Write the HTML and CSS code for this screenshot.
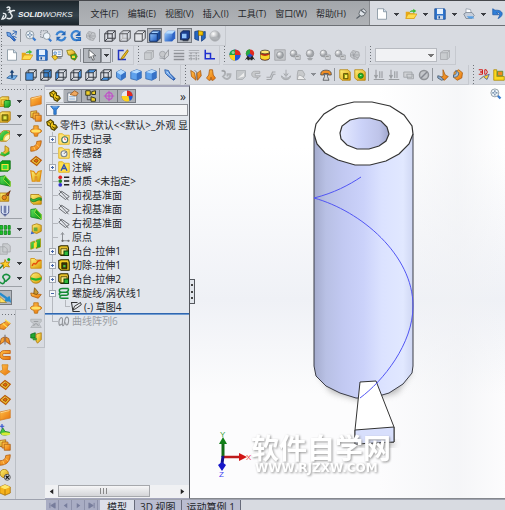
FILE: index.html
```html
<!DOCTYPE html>
<html lang="zh-CN">
<head>
<meta charset="utf-8">
<title>SolidWorks</title>
<link rel="stylesheet" href="styles.css">
</head>
<body>
<svg class="sprite" aria-hidden="true">
  <defs>
    <linearGradient id="gb" x1="0" y1="0" x2="1" y2="1"><stop offset="0" stop-color="#8fc2f8"/><stop offset="1" stop-color="#1c57c0"/></linearGradient>
    <linearGradient id="gy" x1="0" y1="0" x2="1" y2="1"><stop offset="0" stop-color="#fff27a"/><stop offset="1" stop-color="#d99a06"/></linearGradient>
    <linearGradient id="go" x1="0" y1="0" x2="1" y2="1"><stop offset="0" stop-color="#ffc04a"/><stop offset="1" stop-color="#e8730a"/></linearGradient>
    <linearGradient id="gg" x1="0" y1="0" x2="1" y2="1"><stop offset="0" stop-color="#5fe25f"/><stop offset="1" stop-color="#0b9414"/></linearGradient>
    <radialGradient id="gs" cx=".35" cy=".3"><stop offset="0" stop-color="#fff"/><stop offset="1" stop-color="#a2a5a9"/></radialGradient>
  </defs>
  <symbol id="arrow" viewBox="0 0 16 16"><path d="M1 3l5 1 1 3 6 6-2 2-6-6-3-1z" fill="url(#gb)" stroke="#1a4f9c"/><path d="M8 6l6-4M9 1l5 1-1 5M9 8l5 2" stroke="#2d64b4" fill="none" stroke-width="1.300"/></symbol>
  <symbol id="pen" viewBox="0 0 16 16"><path d="M1 1l5 1 2 4 7 7-2 2-7-5-4-4z" fill="url(#gb)" stroke="#1a4f9c"/><path d="M4 4l8 9" stroke="#d9f0ff"/></symbol>
  <symbol id="mag" viewBox="0 0 16 16"><path d="M10 10l4 4" stroke="#397bd0" stroke-width="3"/><circle cx="6.500" cy="6.500" r="5.300" fill="#eef5fb" stroke="#7a858e"/><path d="M6.500 3v7M3 6.500h7" stroke="#5a7898" stroke-width="1.500" stroke-dasharray="2.500 2"/></symbol>
  <symbol id="magarea" viewBox="0 0 16 16"><path d="M1 1h9v9H1z" fill="none" stroke="#6c7781" stroke-dasharray="2 1"/><path d="M11 11l4 4" stroke="#397bd0" stroke-width="3"/><circle cx="9" cy="8" r="4.500" fill="#eef5fb" stroke="#7a858e"/></symbol>
  <symbol id="refresh" viewBox="0 0 16 16"><path d="M2 7a6 6 0 0 1 10-3M14 9a6 6 0 0 1-10 3" fill="none" stroke="#3a83d2" stroke-width="3"/><path d="M14 1v6H8zM2 15V9h6z" fill="#2467b8"/></symbol>
  <symbol id="rot" viewBox="0 0 16 16"><path d="M12 3a6 6 0 1 0 1 8" fill="none" stroke="#3a83d2" stroke-width="3"/><path d="M14 1v7H7z" fill="#2467b8"/><path d="M8 10h6v4H8" stroke="#2467b8" fill="none" stroke-width="1.500"/></symbol>
  <symbol id="gbits" viewBox="0 0 16 16"><path d="M2 6l3-4 4 1 4 1 1 5-3 5-5-1-4-3z" fill="#c5c8cc" stroke="#9b9ea2"/><path d="M5 4l2 9M9 4l-3 5 6 3M3 8h10" stroke="#989ba0" fill="none"/></symbol>
  <symbol id="wire" viewBox="0 0 16 16"><path d="M1 5h10v10H1zM5 1h10v10H5zM1 5l4-4M11 5l4-4M11 15l4-4M1 15l4-4" fill="none" stroke="#3a3d42" stroke-width="1.300"/></symbol>
  <symbol id="hidden" viewBox="0 0 16 16"><path d="M5 1v10h10M1 15l4-4" fill="none" stroke="#aaa"/><path d="M1 5h10v10H1zM5 1h10v10M1 5l4-4M11 5l4-4M11 15l4-4" fill="none" stroke="#55585d" stroke-width="1.300"/></symbol>
  <symbol id="plain" viewBox="0 0 16 16"><path d="M1 5h10v10H1zM1 5l4-4h10v10l-4 4M11 5l4-4" fill="#e3e5e9" stroke="#44474c" stroke-width="1.300"/></symbol>
  <symbol id="shade" viewBox="0 0 16 16"><path d="M1 5l4-4h10v10l-4 4H1z" fill="#1b4c9e" stroke="#122c5e"/><path d="M1 5h10v10H1z" fill="url(#gb)" stroke="#122c5e"/><path d="M3 4l2-2h9l-3 2z" fill="#a5d2ff"/></symbol>
  <symbol id="soft" viewBox="0 0 16 16"><path d="M1 5l4-4h10v10l-4 4H1z" fill="#2f64c6"/><path d="M1 5h10v10H1z" fill="url(#gb)"/><path d="M1 5l4-4h10l-4 4z" fill="#b5dcff"/></symbol>
  <symbol id="shadow" viewBox="0 0 16 16"><path d="M4 10h11l-3 5H5z" fill="#444a55"/><path d="M2 4l3-3h9v9l-3 3H2z" fill="#1b3f8e" stroke="#0d2048"/><path d="M4 5h6v6H4z" fill="#8fc2f8"/></symbol>
  <symbol id="vfront" viewBox="0 0 16 16"><path d="M1 5h10v10H1z" fill="#4a97e6"/><path d="M1 5h10v10H1zM5 5V1h10v10h-4M1 5l4-4M11 5l4-4M11 15l4-4" fill="none" stroke="#2d333b" stroke-width="1.200"/></symbol>
  <symbol id="vback" viewBox="0 0 16 16"><path d="M5 1h10v10H5z" fill="#3f85cc"/><path d="M1 5h10v10H1zM5 1h10v10H5zM1 5l4-4M11 5l4-4M11 15l4-4M1 15l4-4" fill="none" stroke="#2d333b" stroke-width="1.200"/></symbol>
  <symbol id="vleft" viewBox="0 0 16 16"><path d="M1 5l4-4v10l-4 4z" fill="#4a97e6"/><path d="M1 5h10v10H1zM5 1h10v10H5zM1 5l4-4M11 5l4-4M11 15l4-4M1 15l4-4" fill="none" stroke="#2d333b" stroke-width="1.200"/></symbol>
  <symbol id="vright" viewBox="0 0 16 16"><path d="M11 5l4-4v10l-4 4z" fill="#4a97e6"/><path d="M1 5h10v10H1zM5 1h10v10H5zM1 5l4-4M11 5l4-4M11 15l4-4M1 15l4-4" fill="none" stroke="#2d333b" stroke-width="1.200"/></symbol>
  <symbol id="vtop" viewBox="0 0 16 16"><path d="M1 5l4-4h10l-4 4z" fill="#4a97e6"/><path d="M1 5h10v10H1zM5 1h10v10H5zM1 5l4-4M11 5l4-4M11 15l4-4M1 15l4-4" fill="none" stroke="#2d333b" stroke-width="1.200"/></symbol>
  <symbol id="vbot" viewBox="0 0 16 16"><path d="M1 15l4-4h10l-4 4z" fill="#4a97e6"/><path d="M1 5h10v10H1zM5 1h10v10H5zM1 5l4-4M11 5l4-4M11 15l4-4M1 15l4-4" fill="none" stroke="#2d333b" stroke-width="1.200"/></symbol>
  <symbol id="iso" viewBox="0 0 16 16"><path d="M8 1l6 3v7l-6 4-6-4V4z" fill="#5ea1ec" stroke="#2b62a8"/><path d="M8 1l6 3-6 4-6-4z" fill="#b4dbff"/><path d="M8 8v7l6-4V4z" fill="#3673c8"/></symbol>
  <symbol id="tri" viewBox="0 0 16 16"><path d="M1 4l8-3 6 2v9l-6 3-8-2z" fill="#5ea1ec" stroke="#2b62a8"/><path d="M1 4l8-3 6 2-6 3z" fill="#b4dbff"/><path d="M9 6v9l6-3V3z" fill="#3673c8"/></symbol>
  <symbol id="section" viewBox="0 0 16 16"><path d="M1 2l5-1v13l-5-2zM10 3l5-1v9l-5 4z" fill="#2666c2" stroke="#143c7c"/><path d="M6 1l6 1v5H6z" fill="#f5c400" stroke="#866a00"/></symbol>
  <symbol id="ballg" viewBox="0 0 16 16"><circle cx="8" cy="8" r="7" fill="url(#gs)" stroke="#b4b7bb"/><ellipse cx="8" cy="11" rx="5" ry="2" fill="#b0b3b7"/></symbol>
  <symbol id="normal" viewBox="0 0 16 16"><path d="M1 12l4-3h10l-4 5z" fill="#7eb9ef" stroke="#1b538f"/><path d="M8 12V3" stroke="#163f72" stroke-width="2"/><path d="M5 5l3-4 3 4z" fill="#163f72"/></symbol>
  <symbol id="new" viewBox="0 0 16 16"><path d="M2 1h8l4 4v10H2z" fill="#fff" stroke="#7a8997"/><path d="M10 1v4h4" fill="#cfe0ef" stroke="#7a8997"/></symbol>
  <symbol id="open" viewBox="0 0 16 16"><path d="M1 14V5h5l1 2h6v7z" fill="#e8a817"/><path d="M1 14l3-6h12l-4 6z" fill="#ffdc4e" stroke="#d79b18"/><path d="M6 6c1-3 3-3 5-3V1l4 3-4 3V5c-2 0-3 0-5 1z" fill="#3dbb36"/></symbol>
  <symbol id="save" viewBox="0 0 16 16"><path d="M1 1h13l1 2v12H1z" fill="#2f74cc" stroke="#174a93"/><path d="M4 1h8v7H4z" fill="#e6f1fd"/><path d="M4 10h8v5H4z" fill="#cfd9e6"/><path d="M6 11h2v3H6z" fill="#174a93"/></symbol>
  <symbol id="print" viewBox="0 0 16 16"><path d="M4 7V1l6 1 1 5" fill="#fff" stroke="#8b97a5"/><path d="M1 8l3-2h8l3 4-3 4H4z" fill="#c5cedb" stroke="#75808e"/><path d="M5 11h8l2 3H8z" fill="#58a0e4"/></symbol>
  <symbol id="undo" viewBox="0 0 16 16"><path d="M1 1v8h8L6 6c4-1 6 3 2 8 8-3 8-12-4-11z" fill="#2f7fd8" stroke="#1b58a8"/></symbol>
  <symbol id="mkdwg" viewBox="0 0 16 16"><path d="M2 1h13v9H2z" fill="#fff" stroke="#4b5056"/><path d="M4 4h3v3H4zM9 4h4M9 7h4" fill="none" stroke="#2b71c0"/><path d="M1 10l5-2 3 4-4 3z" fill="#f6cb25" stroke="#947312"/><path d="M9 12h5" stroke="#333"/></symbol>
  <symbol id="mkasm" viewBox="0 0 16 16"><path d="M1 2l7-1 4 3-1 5-8-1z" fill="url(#gy)" stroke="#827000"/><path d="M6 8l7-2 2 4-3 5-5-2z" fill="#37a52c" stroke="#826a00"/><path d="M8 9h4v3H8z" fill="#ffde33"/></symbol>
  <symbol id="cursor" viewBox="0 0 16 16"><path d="M4 1v11l3-2 2 5 2-1-2-5h4z" fill="#fff" stroke="#44484c"/></symbol>
  <symbol id="sketch" viewBox="0 0 16 16"><path d="M9 2H2v12h10" fill="none" stroke="#2335c0" stroke-width="2"/><path d="M14 1l1 2-6 9-4 2 2-4z" fill="#f5c31b" stroke="#846000"/></symbol>
  <symbol id="gcube" viewBox="0 0 16 16"><path d="M2 5l4-3h8v9l-3 3H2z" fill="#c9cccf" stroke="#a4a7ab"/><path d="M2 5h9v9M11 5l3-3" fill="none" stroke="#a4a7ab"/></symbol>
  <symbol id="gpen" viewBox="0 0 16 16"><circle cx="6" cy="7" r="4" fill="#c6c8cb" stroke="#999ca1"/><path d="M14 1l-5 7-1 6 6-5zM2 12l8 1" fill="#d3d5d8" stroke="#8d9095"/></symbol>
  <symbol id="lines" viewBox="0 0 16 16"><path d="M1 2h14" stroke="#8e9196"/><path d="M1 6h14M1 10h14M1 14h14" stroke="#8e9196" stroke-width="2"/></symbol>
  <symbol id="dash" viewBox="0 0 16 16"><path d="M1 2h14M1 5h14" stroke="#a0a3a8"/><path d="M1 9h14M1 13h14M4 5v10M11 5v10" stroke="#a0a3a8" stroke-dasharray="2 1" stroke-width="2"/></symbol>
  <symbol id="angle" viewBox="0 0 16 16"><path d="M3 1v12h13M3 6h7v7" fill="none" stroke="#1e2fd0" stroke-width="2"/></symbol>
  <symbol id="rgb" viewBox="0 0 16 16"><circle cx="8" cy="8" r="7.500" fill="#2154d8"/><path d="M8 8V.5A7.500 7.500 0 0 0 .5 8z" fill="#23a843"/><path d="M8 8V.5A7.500 7.500 0 0 1 15.500 8z" fill="#e22b1c"/><path d="M8 8H.5A7.500 7.500 0 0 0 8 15.500z" fill="#ffd21d"/><circle cx="5.500" cy="4.500" r="2" fill="#fff" opacity=".5"/></symbol>
  <symbol id="dial" viewBox="0 0 16 16"><circle cx="8" cy="8" r="7.500" fill="#2154d8"/><path d="M8 8V.5A7.500 7.500 0 0 0 .5 8z" fill="#e8eaec"/><path d="M8 8V.5A7.500 7.500 0 0 1 15.500 8z" fill="#e22b1c"/><path d="M8 8H.5a7.500 7.500 0 0 0 15 0z" fill="#ffd21d"/><path d="M10 8h5.500a7.500 7.500 0 0 1-4 6.500z" fill="#2154d8"/></symbol>
  <symbol id="rgbleg" viewBox="0 0 16 16"><circle cx="8" cy="6" r="5.500" fill="#e22b1c"/><path d="M8 6V.5A5.500 5.500 0 0 0 4 10z" fill="#23a843"/><path d="M8 6l-4 3a5 5 0 0 0 8 0z" fill="#2154d8"/><path d="M1 15l4-6 3 3 3-3 4 6-3-2-1 2H9l-1-2-1 2H5l-1-2z" fill="#252525"/></symbol>
  <symbol id="drum" viewBox="0 0 16 16"><path d="M2 4v8c0 4 12 4 12 0V4z" fill="#c02c15" stroke="#3b3322"/><path d="M2 7c3 3 9 3 12 0v5c-3 3-9 3-12 0z" fill="#f7d82a"/><ellipse cx="8" cy="4" rx="6" ry="2.500" fill="#ffe873" stroke="#3b3322"/></symbol>
  <symbol id="gb1" viewBox="0 0 16 16"><path d="M1 1h14v14H1z" fill="#c4c7ca" stroke="#9b9ea2"/><circle cx="8" cy="8" r="4.500" fill="url(#gs)" stroke="#8e9195"/></symbol>
  <symbol id="gb2" viewBox="0 0 16 16"><circle cx="6" cy="6" r="4.500" fill="url(#gs)" stroke="#95989c"/><path d="M7 8h8v6H9z" fill="#cbcdd0" stroke="#999ca0"/><path d="M9 10h4" stroke="#888"/></symbol>
  <symbol id="gb3" viewBox="0 0 16 16"><circle cx="8" cy="6" r="5" fill="url(#gs)" stroke="#909397"/><path d="M4 12h8l-2 3H6z" fill="#a5a8ac"/></symbol>
  <symbol id="gsweep" viewBox="0 0 16 16"><path d="M2 3c6-3 6 5 2 7 4 6 10 3 10-3h-4v3" fill="none" stroke="#aeb1b5" stroke-width="2.500"/><path d="M3 2l4 2" stroke="#8f9296"/></symbol>
  <symbol id="gpage" viewBox="0 0 16 16"><path d="M2 2h12v8l-4 4H2z" fill="#c4c7ca" stroke="#a6a9ad"/><path d="M4 12l8-7v5z" fill="#eee"/></symbol>
  <symbol id="gbend" viewBox="0 0 16 16"><path d="M13 3H6C1 3 1 11 6 11h4l-1 3 5-5H7V6h6z" fill="#c8cacc" stroke="#a0a3a6"/></symbol>
  <symbol id="gjog" viewBox="0 0 16 16"><path d="M2 11h5l3-7h4M2 14h6l3-7h3" fill="none" stroke="#a4a7ab" stroke-width="1.500"/></symbol>
  <symbol id="gdown" viewBox="0 0 16 16"><path d="M8 1v7M5 6l3 4 3-4M2 9c0 7 12 7 12 0l-3 3H5z" fill="#c4c7ca" stroke="#999ca0"/></symbol>
  <symbol id="gloft" viewBox="0 0 16 16"><path d="M4 2h6l3 5-3 7H3V8z" fill="#c8cacc" stroke="#a0a3a6"/><path d="M4 10c2-4 6 0 10 4H3z" fill="#eee" stroke="#9da0a3"/></symbol>
  <symbol id="phone" viewBox="0 0 16 16"><path d="M1 6c0-6 14-6 14 0v2h-4V6H5v2H1z" fill="#f08d24" stroke="#444"/><path d="M6 7h4v3l2 5H4l2-5z" fill="#d4d6d9" stroke="#45484c"/></symbol>
  <symbol id="boxy" viewBox="0 0 16 16"><path d="M1 1h11l3 3v11H4l-3-3z" fill="url(#gy)" stroke="#b07b00"/><path d="M6 6h6v7H6z" fill="#8d9b10" stroke="#584300"/><path d="M8 8h3v4H8z" fill="#ffe957"/></symbol>
  <symbol id="boxg" viewBox="0 0 16 16"><path d="M1 1h11l3 3v11H4l-3-3z" fill="url(#gy)" stroke="#b07b00"/><circle cx="9" cy="9" r="3.500" fill="#22b22a" stroke="#1c6a18"/><path d="M8 8h2v1H8z" fill="#d6ffbd"/></symbol>
  <symbol id="gins" viewBox="0 0 16 16"><path d="M4 1v10M2 8l2 4 2-4M9 3v9M12 3v9M1 14h14" fill="none" stroke="#9a9da1" stroke-width="1.500"/></symbol>
  <symbol id="gbox" viewBox="0 0 16 16"><path d="M1 4h11v7H1zM5 7h9v6H6z" fill="#cfd1d4" stroke="#9a9da1"/></symbol>
  <symbol id="gno" viewBox="0 0 16 16"><circle cx="8" cy="8" r="6" fill="#c3c6ca" stroke="#909397" stroke-width="2"/><path d="M4 12l8-8" stroke="#858890" stroke-width="2"/></symbol>
  <symbol id="oflat" viewBox="0 0 16 16"><path d="M8 1l3 7 4 2-5 5-8-4 6-1z" fill="url(#go)" stroke="#a65a10"/><path d="M1 9c3 0 5 2 8 5l-3 1-5-3z" fill="#8aa9cd" stroke="#456"/></symbol>
  <symbol id="oblob" viewBox="0 0 16 16"><path d="M3 4l6-3 5 4-1 7-6 3-5-4z" fill="url(#go)" stroke="#a65a10"/><path d="M2 8c4 0 4-3 3-6l4 3c0 5-3 6-7 6z" fill="#a7c3e0" stroke="#36557c"/></symbol>
  <symbol id="d3" viewBox="0 0 16 16"><path d="M1 1h5v3H3h3v3H1M9 1h2q3 3 0 6H9z" fill="none" stroke="#d11a14" stroke-width="1.300"/><path d="M2 14l5-4 8-3-3 7-4-3" fill="#ffd231" stroke="#37559c"/></symbol>
  <symbol id="lyel" viewBox="0 0 16 16"><path d="M1 1h4v9h10v5H1z" fill="#fbd91d" stroke="#a88400"/><path d="M6 3h7v6H6z" fill="#f08a1c" stroke="#4d8a24"/></symbol>
  <symbol id="wings" viewBox="0 0 16 16"><path d="M1 2l5 3 2 10-6-5zM9 6l5-4 1 7-5 6z" fill="url(#go)" stroke="#a6540b"/><path d="M6 2l3 2v10" stroke="#666" fill="none"/></symbol>
  <symbol id="cone" viewBox="0 0 16 16"><path d="M6 1h4l1 7 3 4-3 3H9l-1-4-1 4H5l-3-3 3-4z" fill="url(#go)" stroke="#a6540b"/></symbol>
  <symbol id="pin" viewBox="0 0 16 16"><path d="M5 8l2-5 5-2 3 4-3 5-4 1z" fill="#dee3e8" stroke="#4d545a"/><path d="M8 3l5 4M7 10l-5 4" stroke="#59616a" stroke-width="1.500"/></symbol>
  <symbol id="extr" viewBox="0 0 16 16"><path d="M1 3l3-2h9v9l-2 4H1z" fill="url(#gy)" stroke="#a87300"/><path d="M3 5h7v7H3z" fill="none" stroke="#c08a00"/><path d="M7 7l2-1h6v7l-2 2H7z" fill="url(#gg)" stroke="#0a6d10"/></symbol>
  <symbol id="cut" viewBox="0 0 16 16"><path d="M1 3l3-2h11v11l-3 3H1z" fill="url(#gy)" stroke="#a87300"/><path d="M4 5h8v8H4z" fill="#8a8a14" stroke="#6b5600"/><path d="M6 7h4v4H6z" fill="#e6e94c"/></symbol>
  <symbol id="fextr" viewBox="0 0 16 16"><path d="M1 2l3-1h9l1 3v10H4l-3-3z" fill="#e7c02a" stroke="#2e2900" stroke-width="1.400"/><path d="M4 5h8v8H4z" fill="#fff08a" stroke="#3a3300"/><path d="M8 8h6v6H8z" fill="#2db83a" stroke="#063f0c" stroke-width="1.400"/></symbol>
  <symbol id="fcut" viewBox="0 0 16 16"><path d="M1 2l3-1h10l1 3v11H4l-3-3z" fill="#f2cc22" stroke="#2e2900" stroke-width="1.400"/><path d="M5 5h7v8H5z" fill="#3c3a08" stroke="#1d1a00"/><path d="M7 8h3v3H7z" fill="#48c43e"/></symbol>
  <symbol id="fillet" viewBox="0 0 16 16"><path d="M2 4l4-3h8v10l-4 4H2z" fill="url(#gy)" stroke="#a87300"/><path d="M1 14V8c1-4 4-7 9-7l4 3c-6 1-8 4-9 10z" fill="url(#gg)"/><path d="M7 14c0-5 3-7 7-8v5l-3 3z" fill="#fff5bd"/></symbol>
  <symbol id="rib" viewBox="0 0 16 16"><path d="M1 13l7-5V1l5 3v6l-6 5z" fill="url(#gy)" stroke="#a87300"/><path d="M3 9l5 3 6-4v4l-6 3-6-2z" fill="url(#gg)"/></symbol>
  <symbol id="shell" viewBox="0 0 16 16"><path d="M1 4l3-3h11v11l-3 3H1z" fill="#12a41b" stroke="#096b0e"/><path d="M4 6h8v7H4z" fill="#38e038" stroke="#ffe23b" stroke-width="1.500"/></symbol>
  <symbol id="draft" viewBox="0 0 16 16"><path d="M1 2l7-1 7 8v6L1 12z" fill="url(#gg)" stroke="#087a11"/><path d="M8 1l7 8v6L6 6z" fill="#19a521" stroke="#b9e73c"/></symbol>
  <symbol id="hole" viewBox="0 0 16 16"><path d="M1 4h12v11H1z" fill="url(#gy)" stroke="#a87300"/><circle cx="7" cy="10" r="3" fill="#e8881d" stroke="#8b4b0a"/><path d="M9 6l6-5-3 7z" fill="#c34a1b" stroke="#5b2b0a"/></symbol>
  <symbol id="thread" viewBox="0 0 16 16"><path d="M3 1v8c0 5 10 5 10 0V1M7 1v9c0 1 2 1 2 0V1M6 13l2 2 2-2" fill="#dbe5f8" stroke="#4a578f" stroke-width="1.300"/></symbol>
  <symbol id="patt" viewBox="0 0 16 16"><path d="M1 2h4v5H1zM7 2h3v5H7zM12 2h3v5h-3zM1 9h4v5H1zM7 9h3v5H7zM12 9h3v5h-3z" fill="#1ac328" stroke="#0b7c14"/></symbol>
  <symbol id="gcopy" viewBox="0 0 16 16"><path d="M5 1h7l3 3v8H5zM1 5h7l3 3v7H1z" fill="#c9cccf" stroke="#a1a4a8"/></symbol>
  <symbol id="spark" viewBox="0 0 16 16"><path d="M1 14l6-6" stroke="#29823d" stroke-width="2"/><path d="M8 2l2 4 4-1-2 4 2 3-5-1-3 3V9L2 7l5-1z" fill="#ffce25" stroke="#ac7900"/><circle cx="13" cy="2" r="2" fill="#10a41e"/></symbol>
  <symbol id="spline" viewBox="0 0 16 16"><path d="M1 12c6 6 8-2 5-5S9-1 14 4c2 4-5 5-5 8" fill="none" stroke="#178f3d" stroke-width="2.200"/></symbol>
  <symbol id="instant" viewBox="0 0 16 16"><path d="M1 2l13 9-1-5M14 11H8" fill="none" stroke="#238bce" stroke-width="3"/><path d="M1 6l9 8H1z" fill="#ffe163" stroke="#998234"/></symbol>
  <symbol id="osheet" viewBox="0 0 16 16"><path d="M1 4l14-3v11L1 15z" fill="url(#go)" stroke="#d07a22"/><path d="M2 5l12-3" stroke="#ffe2a1"/></symbol>
  <symbol id="ocopy" viewBox="0 0 16 16"><path d="M1 2l8-1v9H1z" fill="url(#gy)" stroke="#a65a10"/><path d="M4 4h8v8H4z" fill="#ffb53c" stroke="#a65a10"/><path d="M7 7h8v8H7z" fill="url(#go)" stroke="#a65a10"/></symbol>
  <symbol id="orev" viewBox="0 0 16 16"><path d="M5 1h6v4c6 1 6 5 0 6l-1 4H6l-1-4C-1 10-1 6 5 5z" fill="url(#go)" stroke="#b66c0c"/><ellipse cx="8" cy="8" rx="6" ry="2" fill="#ffe264"/></symbol>
  <symbol id="osweep" viewBox="0 0 16 16"><path d="M1 9c5 0 8-2 8-7l6-1c0 9-5 14-14 14z" fill="url(#go)" stroke="#ae5607"/><path d="M5 9l2 5M9 6l4 4" stroke="#ffd275"/></symbol>
  <symbol id="oext" viewBox="0 0 16 16"><path d="M1 8l9-5 5 3-8 8-6-1z" fill="url(#go)" stroke="#ae5607"/><path d="M8 1l7 5M5 6l6 5" stroke="#ffe04a" stroke-width="1.500"/></symbol>
  <symbol id="odia" viewBox="0 0 16 16"><path d="M1 8l7-6 7 5-6 7z" fill="url(#gy)" stroke="#b95a06" stroke-width="1.500"/><path d="M5 8l3-3 3 2-2 3z" fill="#e4680f" stroke="#923e02"/></symbol>
  <symbol id="oknit" viewBox="0 0 16 16"><path d="M1 1l4 1 3 4 3-4 4-1-2 14H9V9H7v6H3z" fill="url(#gy)" stroke="#e08d10" stroke-width="1.500"/></symbol>
  <symbol id="ofold" viewBox="0 0 16 16"><path d="M1 2h5l2 2h7v11H1z" fill="url(#gy)" stroke="#cf8600"/><path d="M3 12c2-7 4 0 6-4s3-2 5-4" stroke="#e6510b" stroke-width="2" fill="none"/></symbol>
  <symbol id="ywave" viewBox="0 0 16 16"><path d="M1 2h11l3 3v10H4l-3-3z" fill="url(#gy)" stroke="#a87300"/><path d="M1 7c5 5 8-3 14 0v3c-5-3-9 5-14 0z" fill="url(#gg)" stroke="#16731c"/></symbol>
  <symbol id="ymix" viewBox="0 0 16 16"><path d="M3 3l6-2 6 2v8l-6 3-6-2z" fill="url(#gy)" stroke="#a87300"/><path d="M5 6h5v5H5z" fill="#69a93b"/><path d="M1 15l1-4 4 3z" fill="#3c66c8"/></symbol>
  <symbol id="ysplit" viewBox="0 0 16 16"><path d="M1 6l5-2v9l-5 2zM8 3l6-2v11l-6 2z" fill="url(#gg)" stroke="#a99a00"/><path d="M5 7l4-2v7l-4 2z" fill="#ffdf35"/></symbol>
  <symbol id="yball" viewBox="0 0 16 16"><ellipse cx="8" cy="8" rx="7.500" ry="7" fill="url(#gy)" stroke="#a87300"/><path d="M1 7c5 2 9 2 14 0v3c-5 2-9 2-14 0z" fill="#23b52d"/></symbol>
  <symbol id="oboat" viewBox="0 0 16 16"><path d="M1 8l14 2-4 5-9-3z" fill="url(#go)" stroke="#ab5a09"/><path d="M6 1l5 6-2 3-4-1z" fill="#c99a33" stroke="#74470e"/></symbol>
  <symbol id="gdome" viewBox="0 0 16 16"><path d="M1 3h14v3l-3 3 3 5H1l4-5-4-3z" fill="#c5c8cc" stroke="#aaadb1"/><path d="M5 6h6M5 12c0-4 6-4 6 0" stroke="#8c9094" fill="none"/></symbol>
  <symbol id="ogy" viewBox="0 0 16 16"><path d="M1 3l6-2v7H1z" fill="#22a830" stroke="#07661b"/><path d="M8 3l7-2v9l-5 5-2-3z" fill="url(#gy)" stroke="#a87300"/><path d="M3 8h6v3H4z" fill="#3a9a32"/></symbol>
  <symbol id="obend" viewBox="0 0 16 16"><path d="M15 2H7C-1 2-1 14 7 14h8v-4H7c-3 0-3-4 0-4h8z" fill="url(#go)" stroke="#bf5708"/></symbol>
  <symbol id="ofan" viewBox="0 0 16 16"><path d="M8 1v13" stroke="#444"/><path d="M7 4L3 6l-2 8 6-4zM9 4l4 2 2 8-6-4z" fill="url(#go)" stroke="#9c4b10"/></symbol>
  <symbol id="odown" viewBox="0 0 16 16"><path d="M4 1h8l-1 7 4 2-7 5-7-5 4-2z" fill="url(#go)" stroke="#d08216"/></symbol>
  <symbol id="gcone" viewBox="0 0 16 16"><path d="M5 5l3 5 6 1c0 5-13 5-12 0z" fill="url(#gg)" stroke="#127a19"/><ellipse cx="9" cy="13" rx="6" ry="2" fill="#d6ea36"/><path d="M4 0v6M1 3h6" stroke="#304fcf" stroke-width="1.500"/></symbol>
  <symbol id="ydel" viewBox="0 0 16 16"><circle cx="7" cy="6" r="5.500" fill="url(#gy)" stroke="#a87300"/><circle cx="11" cy="11" r="4" fill="#ddd" stroke="#333"/><path d="M9 9l4 4M13 9l-4 4" stroke="#111" stroke-width="1.500"/></symbol>
  <symbol id="ycube" viewBox="0 0 16 16"><path d="M1 4l7-3 7 3v8l-7 3-7-3z" fill="#f5b21c" stroke="#a66b00"/><path d="M1 4l7 3 7-3-7-3z" fill="#ffe76b"/><path d="M8 7v8" stroke="#a66b00"/></symbol>
  <symbol id="part" viewBox="0 0 16 16"><path d="M1 4l5-3 4 3v3l3 1 2 3-4 4-4-2-1-3-4-2z" fill="#f2c81b" stroke="#4e4100" stroke-width="1.500"/><path d="M3 4l3 2 3-2M6 6v3M8 10l3 2 3-2M11 12v2" fill="none" stroke="#5b4d00" stroke-width="1.300"/></symbol>
  <symbol id="prop" viewBox="0 0 16 16"><path d="M1 4h12v11H1z" fill="#f7f7f7" stroke="#596675"/><path d="M3 9h8M3 12h8" stroke="#5d90c6"/><path d="M4 6l6-5 5 3-3 4z" fill="#efa860" stroke="#955518"/></symbol>
  <symbol id="config" viewBox="0 0 16 16"><path d="M3 2v11h6" fill="none" stroke="#333"/><path d="M1 1h6v6H1zM9 2l5-1v5H9zM8 9l6 2v4H8z" fill="#efce28" stroke="#333822" stroke-width="1.300"/></symbol>
  <symbol id="target" viewBox="0 0 16 16"><circle cx="8" cy="8" r="4.500" fill="none" stroke="#bf50c8" stroke-width="1.500"/><path d="M8 1v14M1 8h14" stroke="#bf50c8" stroke-width="1.500"/></symbol>
  <symbol id="funnel" viewBox="0 0 16 16"><path d="M1 2h14L10 8v7H6V8z" fill="#3383dc" stroke="#155299"/><path d="M4 3h8" stroke="#c7e3ff"/></symbol>
  <symbol id="hist" viewBox="0 0 16 16"><path d="M1 1h5l2 2h7v12H1z" fill="#ffe372" stroke="#dca500"/><circle cx="9" cy="9" r="4" fill="#fff" stroke="#46735f" stroke-width="1.500"/><path d="M9 6v3h2" fill="none" stroke="#d33"/></symbol>
  <symbol id="sens" viewBox="0 0 16 16"><path d="M1 1h5l2 2h7v12H1z" fill="#ffe372" stroke="#dca500"/><circle cx="8" cy="9" r="4" fill="#eef1f4" stroke="#7b858f" stroke-width="1.500"/><path d="M8 9l3-3" stroke="#333"/></symbol>
  <symbol id="anno" viewBox="0 0 16 16"><path d="M1 1h5l2 2h7v12H1z" fill="#ffe04d" stroke="#dca500"/><path d="M4 13L8 5l4 8M6 10h4" fill="none" stroke="#2c4fb4" stroke-width="1.800"/></symbol>
  <symbol id="mat" viewBox="0 0 16 16"><circle cx="3" cy="3" r="2.500" fill="#d22"/><circle cx="3" cy="8" r="2.500" fill="#282"/><circle cx="3" cy="13" r="2.500" fill="#33c"/><path d="M8 3h7M8 8h7M8 13h7" stroke="#222" stroke-width="1.800"/></symbol>
  <symbol id="plane" viewBox="0 0 16 16"><path d="M5 3l10 7-5 4L1 7zM2 2l12 13" fill="none" stroke="#5b5e63" stroke-width="1.200"/></symbol>
  <symbol id="orig" viewBox="0 0 16 16"><path d="M6 3v10h9M4 5l2-3 2 3" fill="none" stroke="#898c91" stroke-width="1.300"/><circle cx="6" cy="13" r="1.500" fill="#666"/><circle cx="14" cy="13" r="1.500" fill="#777"/></symbol>
  <symbol id="helix" viewBox="0 0 16 16"><path d="M14 2H6C0 2 1 7 5 7h7M5 7C0 8 1 12 5 11h7M5 11c-4 1-3 4 0 4h9M13 2c2 1 1 4-2 5M12 7c3 1 2 4-1 4" fill="none" stroke="#138a32" stroke-width="1.900"/></symbol>
  <symbol id="sk" viewBox="0 0 16 16"><path d="M10 2H2l2 12h9" fill="none" stroke="#333" stroke-width="1.400"/><path d="M4 12l2-5 8-5 1 3-7 5z" fill="#e9ebee" stroke="#333" stroke-width="1.300"/></symbol>
  <symbol id="crv" viewBox="0 0 16 16"><path d="M2 14C-1 5 7-1 6 8s2 8 3 0 6-6 5 1-4 4-4 1M2 14l3-2" fill="none" stroke="#92959a" stroke-width="1.500"/></symbol>
</svg>

<header class="top">
  <div class="brand">
    <svg class="mark" viewBox="0 0 16 16"><path d="M6 2c3-2 5 0 2 2 3 0 2 2 0 3M2 8c5-1 4 6-1 6l2-4M15 5c-4-1-6 2-4 4s0 6-5 4" fill="none" stroke="#e8edf0" stroke-width="1.500"/></svg>
    <span class="name"><b>SOLID</b>WORKS</span>
  </div>
  <nav class="menu">
    <button>文件(F)</button><button>编辑(E)</button><button>视图(V)</button><button>插入(I)</button><button>工具(T)</button><button>窗口(W)</button><button>帮助(H)</button>
    <button aria-label="固定"><svg><use href="#pin"/></svg></button>
  </nav>
  <div class="quick">
    <button class="b" aria-label="新建"><svg><use href="#new"/></svg></button><button class="drop" aria-label="新建选项"></button>
    <button class="b" aria-label="打开"><svg><use href="#open"/></svg></button><button class="drop" aria-label="打开选项"></button>
    <button class="b" aria-label="保存"><svg><use href="#save"/></svg></button><button class="drop" aria-label="保存选项"></button>
    <button class="b" aria-label="打印"><svg><use href="#print"/></svg></button><button class="drop" aria-label="打印选项"></button>
    <button class="b" aria-label="撤销"><svg><use href="#undo"/></svg></button>
  </div>
</header>

<div class="row">
  <div class="bar">
    <button class="b" aria-label="选择视图"><svg><use href="#arrow"/></svg></button><i class="sep"></i>
    <button class="b" aria-label="整屏显示"><svg><use href="#mag"/></svg></button>
    <button class="b" aria-label="局部放大"><svg><use href="#magarea"/></svg></button>
    <button class="b" aria-label="刷新"><svg><use href="#refresh"/></svg></button>
    <button class="b" aria-label="旋转"><svg><use href="#rot"/></svg></button>
    <button class="b" aria-label="平移"><svg><use href="#gbits"/></svg></button><i class="sep"></i>
    <button class="b" aria-label="线架图"><svg><use href="#wire"/></svg></button>
    <button class="b" aria-label="隐藏线可见"><svg><use href="#hidden"/></svg></button>
    <button class="b" aria-label="消除隐藏线"><svg><use href="#plain"/></svg></button>
    <button class="b on" aria-label="带边线上色"><svg><use href="#shade"/></svg></button>
    <button class="b" aria-label="上色"><svg><use href="#soft"/></svg></button>
    <button class="b on" aria-label="阴影"><svg><use href="#shadow"/></svg></button>
    <button class="b" aria-label="剖面视图"><svg><use href="#section"/></svg></button>
    <button class="b" aria-label="真实视图"><svg><use href="#ballg"/></svg></button>
  </div>
</div>

<div class="row">
  <div class="bar">
    <button class="b" aria-label="新建文件"><svg><use href="#new"/></svg></button>
    <button class="b" aria-label="打开文件"><svg><use href="#open"/></svg></button>
    <button class="b" aria-label="保存文件"><svg><use href="#save"/></svg></button>
    <button class="b" aria-label="制作工程图"><svg><use href="#mkdwg"/></svg></button>
    <button class="b" aria-label="制作装配体"><svg><use href="#mkasm"/></svg></button><i class="sep"></i>
    <button class="b on wide" aria-label="选择"><svg><use href="#cursor"/></svg></button><button class="drop box" aria-label="选择方式"></button><i class="sep"></i>
    <button class="b" aria-label="草图"><svg><use href="#sketch"/></svg></button>
  </div>
  <div class="bar">
    <button class="b" aria-label="图层"><svg><use href="#gcube"/></svg></button>
    <button class="b" aria-label="线色"><svg><use href="#gpen"/></svg></button>
    <button class="b" aria-label="线粗"><svg><use href="#lines"/></svg></button>
    <button class="b" aria-label="线型"><svg><use href="#dash"/></svg></button>
    <button class="b" aria-label="颜色显示"><svg><use href="#angle"/></svg></button>
  </div>
  <div class="bar">
    <button class="b" aria-label="外观"><svg><use href="#rgb"/></svg></button>
    <button class="b" aria-label="布景"><svg><use href="#rgbleg"/></svg></button>
    <button class="b" aria-label="贴图"><svg><use href="#drum"/></svg></button>
    <button class="b" aria-label="渲染一"><svg><use href="#gb1"/></svg></button>
    <button class="b" aria-label="渲染二"><svg><use href="#gb2"/></svg></button>
    <button class="b" aria-label="渲染三"><svg><use href="#gb3"/></svg></button>
    <button class="b" aria-label="渲染四"><svg><use href="#gb2"/></svg></button>
    <button class="b" aria-label="渲染五"><svg><use href="#gb2"/></svg></button>
    <button class="b" aria-label="渲染六"><svg><use href="#gbits"/></svg></button>
  </div>
  <div class="bar">
    <select class="combo" aria-label="配置"><option></option></select>
    <button class="b" aria-label="配置零件"><svg><use href="#gcube"/></svg></button>
  </div>
</div>

<div class="row">
  <div class="bar">
    <button class="b" aria-label="正视于"><svg><use href="#normal"/></svg></button><i class="sep"></i>
    <button class="b" aria-label="前视"><svg><use href="#vfront"/></svg></button>
    <button class="b" aria-label="后视"><svg><use href="#vback"/></svg></button>
    <button class="b" aria-label="左视"><svg><use href="#vleft"/></svg></button>
    <button class="b" aria-label="右视"><svg><use href="#vright"/></svg></button>
    <button class="b" aria-label="上视"><svg><use href="#vtop"/></svg></button>
    <button class="b" aria-label="下视"><svg><use href="#vbot"/></svg></button>
    <button class="b" aria-label="等轴测"><svg><use href="#iso"/></svg></button>
    <button class="b" aria-label="上下二等角"><svg><use href="#tri"/></svg></button>
    <button class="b" aria-label="左右二等角"><svg><use href="#tri"/></svg></button><i class="sep"></i>
    <button class="b" aria-label="视图定向"><svg><use href="#pen"/></svg></button>
  </div>
  <div class="bar">
    <button class="b" aria-label="基体法兰"><svg><use href="#wings"/></svg></button>
    <button class="b" aria-label="放样折弯"><svg><use href="#cone"/></svg></button>
    <button class="b" aria-label="边线法兰"><svg><use href="#gsweep"/></svg></button>
    <button class="b" aria-label="斜接法兰"><svg><use href="#gpage"/></svg></button>
    <button class="b" aria-label="褶边"><svg><use href="#gbend"/></svg></button>
    <button class="b" aria-label="转折"><svg><use href="#gjog"/></svg></button>
    <button class="b" aria-label="绘制的折弯"><svg><use href="#gdown"/></svg></button>
    <button class="b" aria-label="交叉折断"><svg><use href="#gloft"/></svg></button>
    <button class="drop dim" aria-label="边角选项"></button>
    <button class="b" aria-label="成形工具"><svg><use href="#phone"/></svg></button><i class="sep"></i>
    <button class="b" aria-label="拉伸切除"><svg><use href="#boxy"/></svg></button>
    <button class="b" aria-label="简单直孔"><svg><use href="#boxg"/></svg></button><i class="sep"></i>
    <button class="b" aria-label="展开"><svg><use href="#gins"/></svg></button>
    <button class="b" aria-label="折叠"><svg><use href="#gins"/></svg></button>
    <button class="b" aria-label="展平"><svg><use href="#gbox"/></svg></button>
    <button class="b" aria-label="不折弯"><svg><use href="#gno"/></svg></button><i class="sep"></i>
    <button class="b" aria-label="切口"><svg><use href="#oflat"/></svg></button>
    <button class="b" aria-label="插入折弯"><svg><use href="#oblob"/></svg></button>
  </div>
  <div class="bar">
    <button class="b" aria-label="3D草图"><svg><use href="#d3"/></svg></button>
    <button class="b" aria-label="结构构件"><svg><use href="#lyel"/></svg></button>
  </div>
</div>

<main class="work">
  <div class="side one">
    <div class="vbar">
      <div class="v"><button class="b" aria-label="拉伸凸台"><svg><use href="#extr"/></svg></button><button class="drop" aria-label="凸台选项"></button></div>
      <div class="v"><button class="b" aria-label="切除"><svg><use href="#cut"/></svg></button><button class="drop" aria-label="切除选项"></button></div>
      <i class="hsep"></i>
      <div class="v"><button class="b" aria-label="圆角"><svg><use href="#fillet"/></svg></button><button class="drop" aria-label="圆角选项"></button></div>
      <button class="b" aria-label="筋"><svg><use href="#rib"/></svg></button>
      <button class="b" aria-label="抽壳"><svg><use href="#shell"/></svg></button>
      <button class="b" aria-label="拔模"><svg><use href="#draft"/></svg></button>
      <button class="b" aria-label="异型孔"><svg><use href="#hole"/></svg></button>
      <button class="b" aria-label="螺纹"><svg><use href="#thread"/></svg></button>
      <i class="hsep"></i>
      <div class="v"><button class="b" aria-label="阵列"><svg><use href="#patt"/></svg></button><button class="drop" aria-label="阵列选项"></button></div>
      <i class="hsep"></i>
      <button class="b" aria-label="复制"><svg><use href="#gcopy"/></svg></button>
      <div class="v"><button class="b" aria-label="参考几何体"><svg><use href="#spark"/></svg></button><button class="drop" aria-label="几何体选项"></button></div>
      <div class="v"><button class="b" aria-label="曲线"><svg><use href="#spline"/></svg></button><button class="drop" aria-label="曲线选项"></button></div>
      <i class="hsep"></i>
      <button class="b on" aria-label="即时三维"><svg><use href="#instant"/></svg></button>
    </div>
    <div class="vbar slim">
      <button class="b" aria-label="曲面延伸"><svg><use href="#oext"/></svg></button>
      <button class="b" aria-label="曲面旋转"><svg><use href="#ofan"/></svg></button>
      <button class="b" aria-label="曲面扫描"><svg><use href="#obend"/></svg></button>
      <button class="b" aria-label="曲面放样"><svg><use href="#odown"/></svg></button>
      <button class="b" aria-label="边界曲面"><svg><use href="#odia"/></svg></button>
      <button class="b" aria-label="填充曲面"><svg><use href="#odia"/></svg></button>
      <button class="b" aria-label="平面区域"><svg><use href="#osheet"/></svg></button>
      <button class="b" aria-label="自由形"><svg><use href="#gcone"/></svg></button>
      <button class="b" aria-label="等距曲面"><svg><use href="#ocopy"/></svg></button>
      <button class="b" aria-label="直纹曲面"><svg><use href="#osweep"/></svg></button>
      <button class="b" aria-label="删除面"><svg><use href="#ydel"/></svg></button>
      <button class="b" aria-label="替换面"><svg><use href="#ycube"/></svg></button>
      <button class="more" aria-label="更多"><svg viewBox="0 0 8 8"><path d="M1 1l3 2 3-2M1 4l3 2 3-2" fill="none" stroke="#444"/></svg></button>
    </div>
  </div>
  <div class="side two">
    <div class="vbar">
      <button class="b" aria-label="平面"><svg><use href="#osheet"/></svg></button>
      <button class="b" aria-label="等距"><svg><use href="#ocopy"/></svg></button>
      <button class="b" aria-label="旋转曲面"><svg><use href="#orev"/></svg></button>
      <button class="b" aria-label="扫描曲面"><svg><use href="#osweep"/></svg></button>
      <button class="b" aria-label="填充"><svg><use href="#odia"/></svg></button>
      <button class="b" aria-label="缝合"><svg><use href="#oknit"/></svg></button>
      <i class="hsep dbl"></i>
      <button class="b" aria-label="弯曲"><svg><use href="#ywave"/></svg></button>
      <button class="b" aria-label="拔模面"><svg><use href="#draft"/></svg></button>
      <button class="b" aria-label="组合"><svg><use href="#ymix"/></svg></button>
      <button class="b" aria-label="分割"><svg><use href="#ysplit"/></svg></button>
      <i class="hsep"></i>
      <button class="b" aria-label="变形"><svg><use href="#ofold"/></svg></button>
      <button class="b" aria-label="圆顶"><svg><use href="#yball"/></svg></button>
      <button class="b" aria-label="压凹"><svg><use href="#oboat"/></svg></button>
      <button class="b" aria-label="包覆"><svg><use href="#orev"/></svg></button>
      <button class="b" aria-label="特征"><svg><use href="#gdome"/></svg></button>
      <button class="b" aria-label="移动实体"><svg><use href="#ogy"/></svg></button>
    </div>
  </div>

  <section class="panel">
    <div class="tabs">
      <button class="tab cur" aria-label="设计树"><svg><use href="#part"/></svg></button>
      <button class="tab" aria-label="属性"><svg><use href="#prop"/></svg></button>
      <button class="tab" aria-label="配置管理"><svg><use href="#config"/></svg></button>
      <button class="tab" aria-label="尺寸专家"><svg><use href="#target"/></svg></button>
      <button class="tab" aria-label="显示管理"><svg><use href="#dial"/></svg></button>
      <button class="exp">»</button>
    </div>
    <label class="filter"><svg><use href="#funnel"/></svg><input type="text" aria-label="过滤"></label>
    <div class="root"><svg><use href="#part"/></svg><span>零件3&nbsp; (默认&lt;&lt;默认&gt;_外观 显</span></div>
    <ul class="tree">
      <li><button class="tg" aria-label="展开历史记录"></button><svg><use href="#hist"/></svg>历史记录</li>
      <li><i class="ln"></i><svg><use href="#sens"/></svg>传感器</li>
      <li><button class="tg" aria-label="展开注解"></button><svg><use href="#anno"/></svg>注解</li>
      <li><i class="ln"></i><svg><use href="#mat"/></svg>材质 &lt;未指定&gt;</li>
      <li><i class="ln"></i><svg><use href="#plane"/></svg>前视基准面</li>
      <li><i class="ln"></i><svg><use href="#plane"/></svg>上视基准面</li>
      <li><i class="ln"></i><svg><use href="#plane"/></svg>右视基准面</li>
      <li><i class="ln"></i><svg><use href="#orig"/></svg>原点</li>
      <li><button class="tg" aria-label="展开拉伸1"></button><svg><use href="#fextr"/></svg>凸台-拉伸1</li>
      <li><button class="tg" aria-label="展开切除1"></button><svg><use href="#fcut"/></svg>切除-拉伸1</li>
      <li><button class="tg" aria-label="展开拉伸2"></button><svg><use href="#fextr"/></svg>凸台-拉伸2</li>
      <li><button class="tg open" aria-label="折叠螺旋线"></button><svg><use href="#helix"/></svg>螺旋线/涡状线1</li>
      <li class="kid"><i class="ln"></i><svg><use href="#sk"/></svg>(-) 草图4</li>
      <li class="off"><i class="ln"></i><svg><use href="#crv"/></svg>曲线阵列6</li>
    </ul>
    <div class="hscroll"><button aria-label="向左"><svg viewBox="0 0 8 8"><path d="M6 1v6L2 4z" fill="#222"/></svg></button><div class="track"><div class="thumb"></div></div><button aria-label="向右"><svg viewBox="0 0 8 8"><path d="M2 1v6l4-3z" fill="#222"/></svg></button></div>
  </section>

  <section class="view">
    <svg class="scene" viewBox="190 85 315 414" preserveAspectRatio="xMinYMin slice">
      <defs>
        <linearGradient id="body"><stop offset="0" stop-color="#a4abcd"/><stop offset=".12" stop-color="#b8c0e4"/><stop offset=".3" stop-color="#c2c9f2"/><stop offset=".5" stop-color="#cbd2fa"/><stop offset=".68" stop-color="#dbe2ff"/><stop offset=".9" stop-color="#e1e8ff"/><stop offset="1" stop-color="#cfd7f3"/></linearGradient>
        <linearGradient id="bore"><stop offset="0" stop-color="#e5eaff"/><stop offset=".45" stop-color="#cbd2f8"/><stop offset=".8" stop-color="#bec4e9"/><stop offset="1" stop-color="#9fa5cb"/></linearGradient>
        <filter id="blur" x="-30%" y="-30%" width="160%" height="160%"><feGaussianBlur stdDeviation="3"/></filter>
      </defs>
      <path d="M316 370l15 22 32 9 34-8 15-22z" fill="#888" opacity=".6" filter="url(#blur)"/>
      <path d="M356 441h38v5h-38z" fill="#777" opacity=".6" filter="url(#blur)"/>
      <path d="M314 134V366L316 376 326 386 340 393 356 398 372 398 389 393 403 384 412 373 413 366V134z" fill="url(#body)" stroke="#3b3d47"/>
      <path d="M314 134L316 124 324 114 337 106 354 102 372 102 390 106 404 115 412 126 413 134 409 144 399 154 386 161 370 165 355 165 338 160 325 153 317 144z" fill="#fff" stroke="#333" stroke-width="1.200"/>
      <path d="M340 133L342 126 350 120 359 118 370 118 381 121 387 127 389 134 386 141 379 146 369 149 357 149 347 145 341 139z" fill="url(#bore)" stroke="#333" stroke-width="1.200"/>
      <path d="M360 382L376 381 394 427V442L355 444V430z" fill="#fff" stroke="#333"/>
      <path d="M355 430L394 427V442L355 444z" fill="#d8dffc" stroke="#333"/>
      <path d="M361 177C349 185 334 193 314 198C361 211 413 255 413 306C413 344 383 381 360 398" fill="none" stroke="#5155f4"/>
      <g class="wm"><text x="251" y="459" class="wm1">软件自学网</text><text x="255" y="472" class="wm2">WWW.RJZXW.COM</text></g>
      <path d="M223 457V443" stroke="#126d16" stroke-width="3"/><path d="M219 444l4-7 4 7z" fill="#128018"/>
      <path d="M223 457h17" stroke="#bd1b1b" stroke-width="2.500"/><path d="M239 453l8 4-8 4z" fill="#d11515"/>
      <path d="M223 456l-1 8" stroke="#12128d" stroke-width="3"/><path d="M218 465l4-3 4 3-4 6z" fill="#1717c9"/>
      <text x="220" y="437" class="ax" fill="#34a034">Y</text><text x="246" y="460" class="ax" fill="#ef4747">X</text><text x="219" y="477" class="ax" fill="#3b3bf0">Z</text>
    </svg>
    <button class="grab" aria-label="收起面板"><i></i><i></i><i></i></button>
    <button class="find" aria-label="查找"><svg><use href="#mag"/></svg></button>
  </section>
</main>

<footer class="foot">
  <div class="nav">
    <button aria-label="第一个"><svg viewBox="0 0 8 8"><path d="M1 1v6M7 1v6L2 4z" fill="#777d9c" stroke="#777d9c"/></svg></button>
    <button aria-label="上一个"><svg viewBox="0 0 8 8"><path d="M6 1v6L2 4z" fill="#777d9c"/></svg></button>
    <button aria-label="下一个"><svg viewBox="0 0 8 8"><path d="M2 1v6l4-3z" fill="#777d9c"/></svg></button>
    <button aria-label="最后一个"><svg viewBox="0 0 8 8"><path d="M7 1v6M1 1v6l5-3z" fill="#777d9c" stroke="#777d9c"/></svg></button>
  </div>
  <button class="sheet cur">模型</button><button class="sheet">3D 视图</button><button class="sheet">运动算例 1</button>
</footer>
</body>
</html>
```
FILE: styles.css
```css
* { box-sizing: border-box; }
html, body { height: 100%; }
body {
  margin: 0;
  display: flex;
  flex-direction: column;
  overflow: hidden;
  background: #d8dbe1;
  color: #25272b;
  font: 10px/14px "Open Sans", "Noto Sans CJK SC", sans-serif;
}
.sprite { position: absolute; width: 0; height: 0; }
button {
  margin: 0;
  padding: 0;
  border: 0;
  background: none;
  color: inherit;
  font: inherit;
  white-space: nowrap;
}
svg { display: block; flex: none; }
i { display: block; flex: none; }
svg:not([viewBox]) { width: 12px; height: 12px; }

.top {
  display: flex;
  flex: none;
  height: 26px;
  border-top: 1px solid #46484c;
  border-bottom: 1px solid #6d7075;
}
.brand {
  display: flex;
  align-items: center;
  gap: 2px;
  width: 79px;
  padding: 4px 0 0 1px;
  background: linear-gradient(#1d262c, #35434c 60%, #1c252b);
  color: #f1f3f4;
}
.mark { width: 15px; height: 15px; margin-bottom: 4px; }
.name { font: italic 8px/10px "Liberation Sans", sans-serif; }
.menu {
  display: flex;
  align-items: center;
  justify-content: space-between;
  width: 293px;
  padding: 2px 2px 0 12px;
  background: linear-gradient(#a3a7ab, #b0b3b7);
  border-right: 1px solid #898c90;
  font-size: 9px;
}
.quick { display: flex; align-items: center; padding: 2px 0 0 4px; }

.row { display: flex; flex: none; height: 20px; overflow: hidden; }
.row:nth-of-type(2) { height: 19px; }
.bar {
  display: flex;
  flex: none;
  align-items: center;
  margin-right: 3px;
  padding: 0 3px 0 4px;
  border: 1px solid #c6c9cf;
  border-width: 0 1px 1px 0;
  background: radial-gradient(circle, #6f7379 1px, transparent 1px) 0 2px / 3px 3px repeat-y;
}
.b {
  display: flex;
  flex: none;
  align-items: center;
  justify-content: center;
  width: 15px;
  height: 15px;
}
.b.on { border: 1px solid #777b81; background: #b4b8be; }
.b.wide { width: 18px; }
.sep { width: 1px; height: 13px; margin: 0 2px 0 1px; background: #92969c; }
.drop {
  flex: none;
  width: 14px;
  height: 15px;
  background: conic-gradient(from -45deg at 50% 100%, #3b3e43 90deg, transparent 0) center / 5px 3px no-repeat;
}
.drop.box { width: 10px; border: 1px solid #92969c; }
.drop.dim { width: 10px; opacity: .5; }
.combo {
  width: 62px;
  height: 14px;
  margin-left: 2px;
  padding: 0;
  border: 1px solid #b7bac0;
  border-radius: 0;
  appearance: none;
  background: linear-gradient(#777, #777) 52px 5px / 6px 1px no-repeat, linear-gradient(#777, #777) 53px 6px / 4px 1px no-repeat, linear-gradient(#777, #777) 54px 7px / 2px 1px no-repeat, #f1f2f4;
}

.work { display: flex; flex: 1; min-height: 0; }
.side { flex: none; overflow: hidden; }
.side.one { width: 27px; }
.side.two { width: 18px; }
.vbar {
  padding: 9px 2px 4px 0;
  border: 1px solid #bcc0c6;
  border-width: 0 1px 1px 0;
  background: radial-gradient(circle, #6f7379 1px, transparent 1px) 1px 3px / 3px 3px repeat-x;
}
.one .b { margin-left: -3px; }
.one .slim { width: 16px; padding-top: 7px; border-bottom: 0; }
.two .vbar { padding: 8px 0 2px 1px; }
.v { display: flex; }
.hsep { height: 1px; margin: 0 2px 3px 0; background: #9da1a7; }
.hsep.dbl { height: 4px; margin-top: 1px; border: 1px solid #a9adb3; border-width: 1px 0; background: none; }
.more { width: 10px; height: 12px; }
.more svg { width: 9px; height: 9px; }

.panel {
  display: flex;
  flex-direction: column;
  flex: none;
  width: 145px;
  border: 1px solid #a5a7bb;
  border-width: 2px 1px 1px 0;
  border-right-color: #55585e;
  background: #e2e6ec;
}
.tabs { display: flex; height: 17px; padding: 2px 3px 0 1px; }
.tab {
  display: flex;
  align-items: center;
  justify-content: center;
  width: 18px;
  height: 14px;
  border: 1px solid #777b82;
  border-left-width: 0;
  background: #adb0b6;
}
.tab.cur { border-color: #c4c7cc; background: #e6e9ee; }
.exp { margin-left: auto; font-size: 12px; line-height: 14px; }
.filter {
  display: flex;
  align-items: center;
  height: 12px;
  margin: 0 1px;
  padding-left: 3px;
  border: 1px solid #8d9096;
  background: #f3f4f6;
}
.filter svg { width: 10px; height: 10px; }
.filter input { width: 100%; min-width: 0; height: 8px; padding: 0; border: 0; outline: 0; background: none; }
.root {
  display: flex;
  align-items: center;
  gap: 2px;
  height: 14px;
  margin-top: 2px;
  padding-left: 1px;
  overflow: hidden;
  white-space: nowrap;
}
.tree {
  flex: 1;
  margin: 0;
  padding: 0;
  list-style: none;
  background: linear-gradient(#b5b8be, #b5b8be) 7px 0 / 1px 190px no-repeat;
}
.tree li { display: flex; align-items: center; height: 14px; padding-left: 4px; white-space: nowrap; }
.tree svg { margin-right: 2px; }
.tg {
  width: 7px;
  height: 7px;
  margin-right: 2px;
  border: 1px solid #a3a8b0;
  background: linear-gradient(#4665a5, #4665a5) 1px 2px / 3px 1px no-repeat, linear-gradient(#4665a5, #4665a5) 2px 1px / 1px 3px no-repeat, #f5f7fa;
}
.tg.open { background: linear-gradient(#4665a5, #4665a5) 1px 2px / 3px 1px no-repeat, #f5f7fa; }
.ln { width: 5px; height: 1px; margin: 0 0 0 4px; background: #b5b8be; }
.tree .kid { padding-left: 16px; border-bottom: 1px solid #2f66b0; box-shadow: 0 1px #6f9bd0; }
.kid .ln { height: 7px; margin-bottom: 6px; border: 1px solid #b5b8be; border-width: 0 0 1px 1px; background: none; }
.tree .off { color: #9b9ea3; }
.hscroll { display: flex; height: 13px; background: #f0f1f3; }
.hscroll button { flex: none; width: 13px; }
.hscroll svg { width: 7px; height: 7px; margin: auto; }
.track { flex: 1; }
.thumb {
  width: 78%;
  height: 12px;
  border: 1px solid #a6a8ac;
  background: repeating-linear-gradient(90deg, #888 0 1px, transparent 1px 3px) center / 8px 6px no-repeat, linear-gradient(#f6f6f7, #d4d5d8);
}

.view {
  position: relative;
  flex: 1;
  min-width: 0;
  overflow: hidden;
  border-bottom: 1px solid #85888e;
  background: linear-gradient(90deg, transparent 60%, rgba(240, 241, 244, .6) 85%, transparent), linear-gradient(#fff 15%, #eff1f6 52%, #fcfcfd 75%);
}
.scene { width: 100%; height: 100%; }
.grab {
  position: absolute;
  left: -1px;
  top: 47%;
  display: flex;
  flex-direction: column;
  align-items: center;
  justify-content: space-evenly;
  width: 6px;
  height: 25px;
  border: 1px solid #55585e;
  border-left: 0;
  background: #e2e6ec;
}
.grab i { width: 2px; height: 2px; background: #444; }
.find { position: absolute; right: 3px; top: 3px; }
.wm { font-family: "Noto Sans CJK SC", sans-serif; font-weight: 700; fill: #fff; filter: drop-shadow(1px 1px 1px #999); }
.wm1 { font-size: 28px; }
.wm2 { font-family: "DejaVu Sans", sans-serif; font-size: 12px; }
.ax { font: 8px "Liberation Sans", sans-serif; }

.foot { display: flex; flex: none; height: 11px; padding-left: 46px; overflow: hidden; background: #d8dbe1; border-top: 1px solid #9ea2ae; }
.nav { display: flex; width: 54px; background: #a9adc4; }
.nav button { width: 13px; border-right: 1px solid #8e92ab; }
.nav svg { width: 7px; height: 7px; margin: auto; }
.sheet { height: 14px; padding: 0 5px; border-right: 1px solid #676b7a; background: #babdd0; line-height: 14px; }
.sheet.cur { padding: 0 7px; background: #dde0ea; }
```
